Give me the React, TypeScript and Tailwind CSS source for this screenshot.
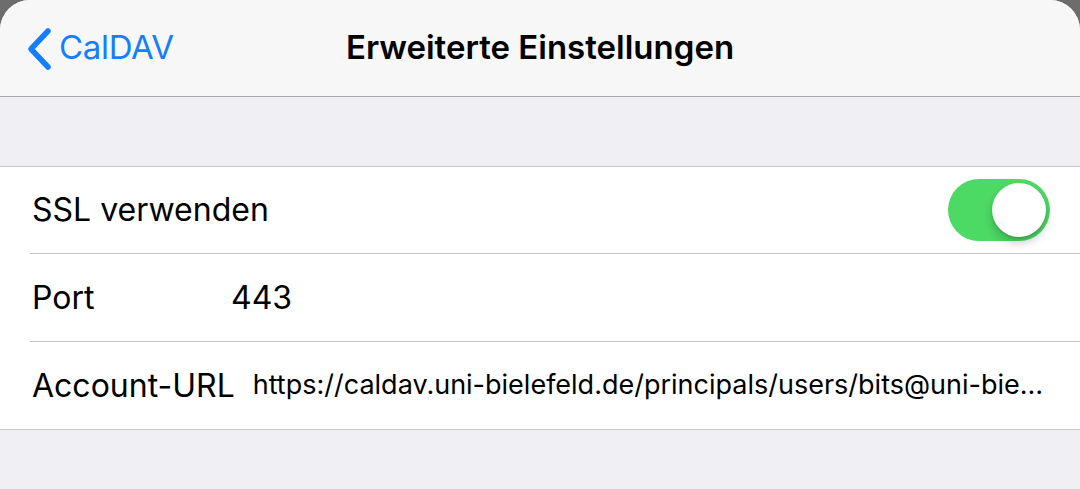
import React, { useState } from 'react';

const font = { fontFamily: 'Inter, "Liberation Sans", sans-serif' };

const Toggle: React.FC<{ on: boolean; onChange: () => void }> = ({ on, onChange }) => (
  <button
    onClick={onChange}
    className={`relative w-[102px] h-[62px] rounded-full ${on ? 'bg-[#4cd964]' : 'bg-[#e5e5ea]'}`}
  >
    <span
      className={`absolute top-[4px] w-[54px] h-[54px] rounded-full bg-white shadow-[0_6px_10px_rgba(0,0,0,0.2),0_1px_2px_rgba(0,0,0,0.15)] ${
        on ? 'left-[44px]' : 'left-[4px]'
      }`}
    />
  </button>
);

const App: React.FC = () => {
  const [ssl, setSsl] = useState(true);

  return (
    <div className="w-[1080px] h-[489px] bg-[#6d6d6d] overflow-hidden" style={font}>
      <div className="h-full rounded-t-[30px] bg-[#efeff4] overflow-hidden flex flex-col">
        <div className="relative h-[97px] shrink-0 bg-[#f7f7f8] border-b border-[#a9a9ac] flex items-center">
          <button className="flex items-center pl-[26px] text-[#157efb]">
            <svg width="26" height="44" viewBox="0 0 26 44" className="mt-[2px]">
              <path
                d="M22 4 L5 22 L22 40"
                fill="none"
                stroke="#157efb"
                strokeWidth="5.5"
                strokeLinecap="round"
                strokeLinejoin="round"
              />
            </svg>
            <span className="ml-[7px] text-[33px] tracking-[-0.3px]">CalDAV</span>
          </button>
          <div className="absolute inset-x-0 top-0 h-full flex items-center justify-center pointer-events-none">
            <span className="text-[33px] font-semibold text-black">Erweiterte Einstellungen</span>
          </div>
        </div>

        <div className="h-[69px] shrink-0" />

        <div className="bg-white border-t border-b border-[#c8c7cc]">
          <div className="h-[86px] flex items-center pl-[32px] pr-[30px]">
            <span className="text-[32px] text-black flex-1">SSL verwenden</span>
            <Toggle on={ssl} onChange={() => setSsl(!ssl)} />
          </div>
          <div className="ml-[30px] border-t border-[#c8c7cc]" />
          <div className="h-[87px] flex items-center pl-[32px]">
            <span className="text-[32px] text-black w-[199px]">Port</span>
            <span className="text-[32px] text-black">443</span>
          </div>
          <div className="ml-[30px] border-t border-[#c8c7cc]" />
          <div className="h-[87px] flex items-center pl-[32px] pr-[30px]">
            <span className="text-[32px] text-black shrink-0">Account-URL</span>
            <span className="ml-[18px] text-[27px] text-black whitespace-nowrap">
              https://caldav.uni-bielefeld.de/principals/users/bits@uni-bie…
            </span>
          </div>
        </div>
      </div>
    </div>
  );
};

export default App;
